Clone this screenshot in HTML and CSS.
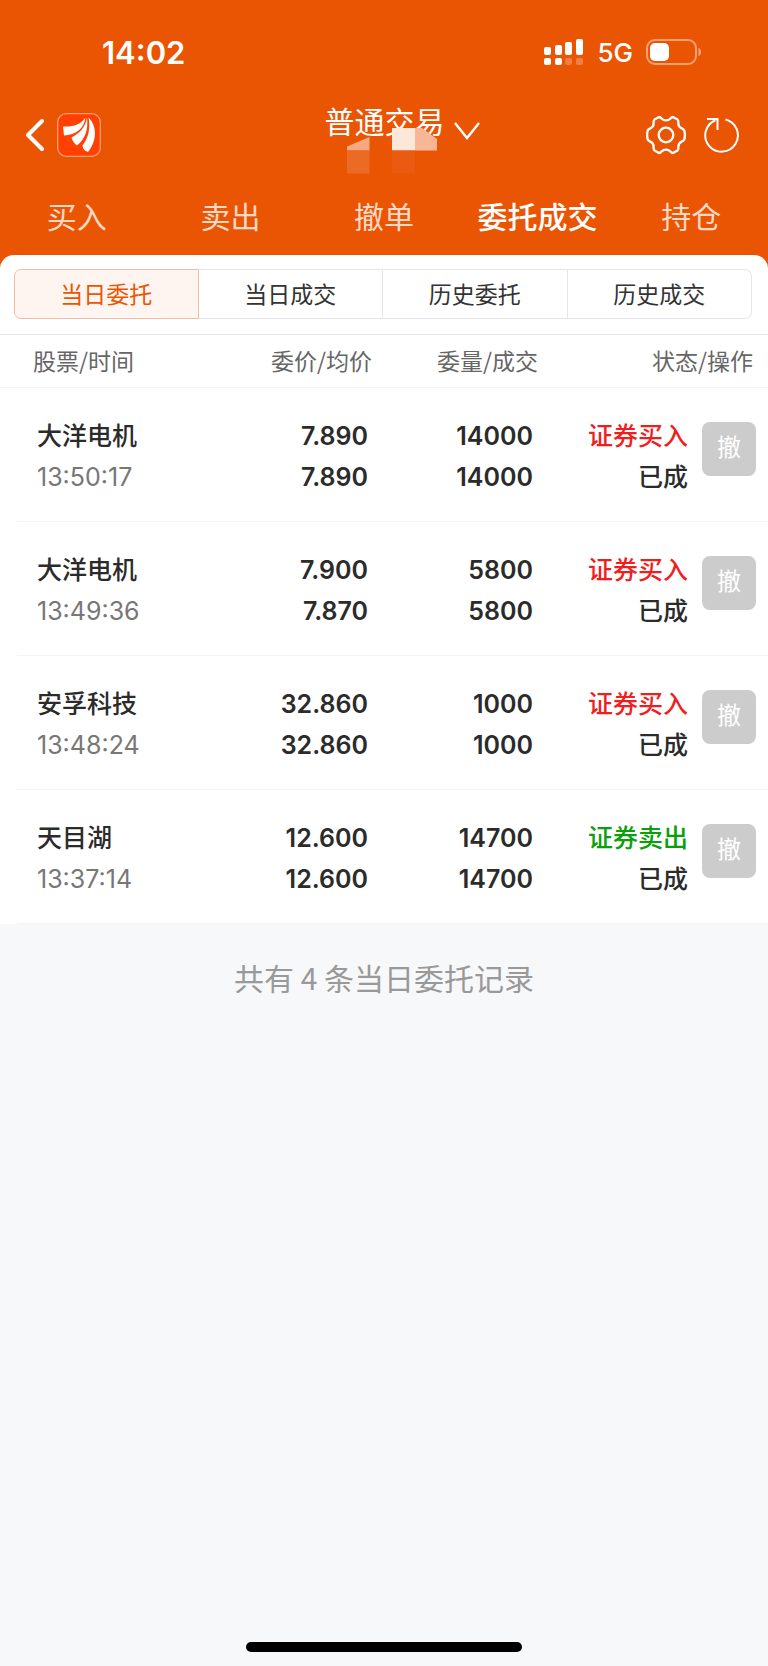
FILE: index.html
```
<!DOCTYPE html>
<html lang="zh-CN">
<head>
<meta charset="utf-8">
<meta name="viewport" content="width=device-width, initial-scale=1">
<title>委托成交</title>
<link rel="stylesheet" href="styles.css">
</head>
<body>
<div class="app">
  <header class="top">
    <div class="status-bar">
      <span class="clock">14:02</span>
      <div class="status-icons">
        <svg class="signal" width="40" height="28" viewBox="0 0 40 28" aria-hidden="true">
          <g fill="#fff">
            <rect x="0" y="9" width="7" height="8" rx="2"/><rect x="11" y="7" width="7" height="10" rx="2"/>
            <rect x="21" y="4" width="7" height="13" rx="2"/><rect x="32" y="1" width="7" height="16" rx="2"/>
            <rect x="0" y="20" width="7" height="7" rx="2"/><rect x="11" y="20" width="7" height="7" rx="2"/>
            <rect x="21" y="20" width="7" height="7" rx="2" opacity=".25"/><rect x="32" y="20" width="7" height="7" rx="2" opacity=".25"/>
          </g>
        </svg>
        <span class="network">5G</span>
        <svg class="battery" width="56" height="26" viewBox="0 0 56 26" aria-hidden="true">
          <rect x="1" y="1" width="49" height="24" rx="8" fill="none" stroke="#fff" stroke-opacity=".45" stroke-width="2"/>
          <path d="M52.500 9c3.300 1 3.300 7 0 8z" fill="#fff" opacity=".5"/>
          <rect x="4" y="4" width="19" height="18" rx="5" fill="#fff"/>
        </svg>
      </div>
    </div>
    <div class="title-bar">
      <div class="side">
        <button class="icon-button" aria-label="返回">
          <svg width="20" height="34" viewBox="0 0 20 34"><path d="M17 3 3 17l14 14" fill="none" stroke="#fff" stroke-width="4" stroke-linecap="round" stroke-linejoin="round"/></svg>
        </button>
        <svg class="brand" width="44" height="44" viewBox="0 0 44 44" aria-hidden="true">
          <rect x=".7" y=".7" width="42.600" height="42.600" rx="8.500" fill="#ff4000" stroke="#ff9d77" stroke-width="1.300"/>
          <path d="M28.500 4.500C27 16 19 21.500 7 22.500L6 13.500C16 14 23.500 12 28.500 4.500z" fill="#fff"/>
          <path d="M30 4.500C31.500 17 28 26 20 32.500Q16 30 14.500 24.500C23 20 28.500 14 30 4.500z" fill="#fff"/>
          <path d="M31.500 4.500C40.500 13 40 28 31 39Q26 37.500 25.500 32.500C32 24 33.500 14 31.500 4.500z" fill="#fff"/>
        </svg>
      </div>
      <button class="account">
        <span class="account-name">普通交易</span>
        <svg class="chevron" width="28" height="20" viewBox="0 0 28 20" aria-hidden="true"><path d="m2 2 12 15L26 2" fill="none" stroke="#fff" stroke-width="2.400"/></svg>
        <svg class="mask" width="90" height="46" viewBox="0 0 90 46" aria-hidden="true">
          <path d="M0 9.500 22.500 0v13.500H0z" fill="#f5a982"/><path d="M0 13.500h22.500v23H0z" fill="#ec6b24"/>
          <path d="M45 -9h23v22.500H45z" fill="#fce7db"/><path d="M68 -9h7l15 11v11.500H68z" fill="#f7b796"/>
          <path d="M45 13.500h23v23H45z" fill="#ea5a10"/>
        </svg>
      </button>
      <div class="side side-end">
        <button class="icon-button" aria-label="设置">
          <svg width="40" height="40" viewBox="0 0 40 40"><g fill="none" stroke="#fff" stroke-width="2.300" stroke-linejoin="round"><path d="M38.300 15.500Q39.400 20 38.300 24.500C37 27.500 32 26 32.400 32Q32.500 34.500 31.500 35.500L27 38Q25.500 38 24.500 36.500C22 34 18 34 15.500 36.500Q14.500 38 13 38L8.500 35.500Q7.500 34.500 7.600 32C8 26 3 27.500 1.700 24.500Q.600 20 1.700 15.500C3 12.500 8 14 7.600 8Q7.500 5.500 8.500 4.500L13 2Q14.500 2 15.500 3.500C18 6 22 6 24.500 3.500Q25.500 2 27 2L31.500 4.500Q32.500 5.500 32.400 8C32 14 37 12.500 38.300 15.500z"/><circle cx="20" cy="20" r="7.300"/></g></svg>
        </button>
        <button class="icon-button" aria-label="刷新">
          <svg width="36" height="36" viewBox="0 0 36 36"><path d="M21.500 2.500A16.300 16.300 0 1 1 11.500 3.200M3 2h10.500v11" fill="none" stroke="#fff" stroke-width="2"/></svg>
        </button>
      </div>
    </div>
    <nav class="tabs">
      <a class="tab" href="#buy">买入</a>
      <a class="tab" href="#sell">卖出</a>
      <a class="tab" href="#cancel">撤单</a>
      <a class="tab tab-active" href="#orders" aria-current="page">委托成交</a>
      <a class="tab" href="#holdings">持仓</a>
    </nav>
  </header>
  <main class="panel">
    <div class="segments">
      <button class="segment segment-active">当日委托</button>
      <button class="segment">当日成交</button>
      <button class="segment">历史委托</button>
      <button class="segment">历史成交</button>
    </div>
    <table class="orders">
      <colgroup><col><col class="col-price"><col class="col-volume"><col class="col-state"><col class="col-action"></colgroup>
      <thead>
        <tr><th>股票/时间</th><th>委价/均价</th><th>委量/成交</th><th colspan="2">状态/操作</th></tr>
      </thead>
      <tbody>
        <tr>
          <td><div class="name">大洋电机</div><div class="time">13:50:17</div></td>
          <td><div>7.890</div><div>7.890</div></td>
          <td><div>14000</div><div>14000</div></td>
          <td><div class="state buy">证券买入</div><div class="state">已成</div></td>
          <td><button class="cancel">撤</button></td>
        </tr>
        <tr>
          <td><div class="name">大洋电机</div><div class="time">13:49:36</div></td>
          <td><div>7.900</div><div>7.870</div></td>
          <td><div>5800</div><div>5800</div></td>
          <td><div class="state buy">证券买入</div><div class="state">已成</div></td>
          <td><button class="cancel">撤</button></td>
        </tr>
        <tr>
          <td><div class="name">安孚科技</div><div class="time">13:48:24</div></td>
          <td><div>32.860</div><div>32.860</div></td>
          <td><div>1000</div><div>1000</div></td>
          <td><div class="state buy">证券买入</div><div class="state">已成</div></td>
          <td><button class="cancel">撤</button></td>
        </tr>
        <tr>
          <td><div class="name">天目湖</div><div class="time">13:37:14</div></td>
          <td><div>12.600</div><div>12.600</div></td>
          <td><div>14700</div><div>14700</div></td>
          <td><div class="state sell">证券卖出</div><div class="state">已成</div></td>
          <td><button class="cancel">撤</button></td>
        </tr>
      </tbody>
    </table>
  </main>
  <p class="summary">共有 4 条当日委托记录</p>
  <div class="home-indicator"></div>
</div>
</body>
</html>
```
FILE: styles.css
```
* {
  box-sizing: border-box;
}

body {
  margin: 0;
  background: #f7f8fa;
  color: #2b2b2b;
  font-family: Inter, "Noto Sans CJK SC", sans-serif;
}

button {
  margin: 0;
  padding: 0;
  border: 0;
  background: none;
  color: inherit;
  font: inherit;
  cursor: pointer;
}

svg {
  display: block;
}

.app {
  display: flex;
  flex-direction: column;
  min-height: 100vh;
}

.top {
  padding-bottom: 16px;
  background: #ea5504;
  color: #fff;
}

.status-bar {
  display: flex;
  align-items: center;
  justify-content: space-between;
  height: 104px;
  padding: 0 66px 0 102px;
}

.clock {
  font-size: 31px;
  font-weight: 600;
}

.status-icons {
  display: flex;
  align-items: center;
  gap: 13px;
}

.network {
  font-size: 26px;
  font-weight: 500;
}

.title-bar {
  display: grid;
  grid-template-columns: 1fr auto 1fr;
  align-items: center;
  height: 62px;
  padding: 0 28px 0 25px;
}

.side {
  display: flex;
  align-items: center;
  gap: 12px;
}

.side-end {
  justify-content: flex-end;
  gap: 18px;
}

.account {
  position: relative;
  display: flex;
  align-items: center;
  align-self: start;
  gap: 8px;
  height: 37px;
  padding-left: 40px;
}

.account-name {
  font-size: 30px;
  line-height: 37px;
}

.chevron {
  align-self: end;
}

.mask {
  position: absolute;
  top: 33px;
  left: 62px;
  overflow: visible;
}

.tabs {
  display: grid;
  grid-template-columns: repeat(5, 1fr);
  height: 86px;
}

.tab {
  position: relative;
  color: #fcd9c5;
  font-size: 30px;
  line-height: 102px;
  text-align: center;
  text-decoration: none;
}

.tab-active {
  color: #fff;
  font-weight: 500;
}

.tab-active::after {
  content: "";
  position: absolute;
  bottom: 0;
  left: 50%;
  width: 36px;
  height: 6px;
  margin-left: -18px;
  border-radius: 3px;
  background: #fff;
}

.panel {
  margin-top: -13px;
  border-radius: 14px 14px 0 0;
  background: #fff;
}

.segments {
  display: grid;
  grid-template-columns: repeat(4, 1fr);
  margin: 14px 16px 15px 14px;
}

.segment {
  height: 50px;
  padding-bottom: 2px;
  border: 1px solid #e5e6ee;
  border-left-width: 0;
  color: #333;
  font-size: 23px;
}

.segment-active {
  border: 1px solid #f4bda3;
  border-radius: 7px 0 0 7px;
  background: #fef5f1;
  color: #ea5504;
}

.segment:last-child {
  border-radius: 0 7px 7px 0;
}

.orders {
  width: 100%;
  border-top: 1px solid #e8e8ea;
  border-spacing: 0;
  table-layout: fixed;
}

.col-price {
  width: 168px;
}

.col-volume {
  width: 166px;
}

.col-state {
  width: 152px;
}

.col-action {
  width: 74px;
}

.orders th {
  height: 53px;
  padding: 0 4px 3px 0;
  border-bottom: 1px solid #f4f4f5;
  color: #666;
  font-family: "Noto Sans CJK SC", sans-serif;
  font-size: 23px;
  font-weight: 400;
  line-height: 32px;
  text-align: right;
}

.orders th:first-child {
  padding-left: 33px;
  text-align: left;
}

.orders th:last-child {
  padding-right: 15px;
}

.orders td {
  height: 134px;
  padding: 28px 8px 24px 0;
  background: linear-gradient(#f4f4f5, #f4f4f5) 0 100% / 100% 1px no-repeat;
  font-size: 25px;
  font-weight: 600;
  line-height: 41px;
  text-align: right;
  vertical-align: top;
}

.orders td:first-child {
  padding-left: 37px;
  background-position: 17px 100%;
  text-align: left;
}

.orders td:nth-child(3) {
  padding-right: 9px;
}

.orders td:nth-child(4) {
  padding-right: 6px;
}

.orders td:last-child {
  padding: 34px 12px 0 0;
}

.orders .name,
.orders .state {
  font-weight: 500;
}

.orders .time {
  color: #777;
  font-weight: 400;
}

.buy {
  color: #f01f1f;
}

.sell {
  color: #0aa00a;
}

.cancel {
  width: 54px;
  height: 54px;
  padding-bottom: 2px;
  border-radius: 8px;
  background: #ccc;
  color: #fff;
  font-size: 24px;
  font-weight: 400;
  line-height: 32px;
  vertical-align: top;
}

.summary {
  margin: 32px 0 0;
  color: #999;
  font-family: "Noto Sans CJK SC", sans-serif;
  font-size: 30px;
  font-weight: 400;
  line-height: 42px;
  text-align: center;
}

.home-indicator {
  width: 36%;
  height: 10px;
  margin: auto auto 14px;
  border-radius: 5px;
  background: #000;
}
```
